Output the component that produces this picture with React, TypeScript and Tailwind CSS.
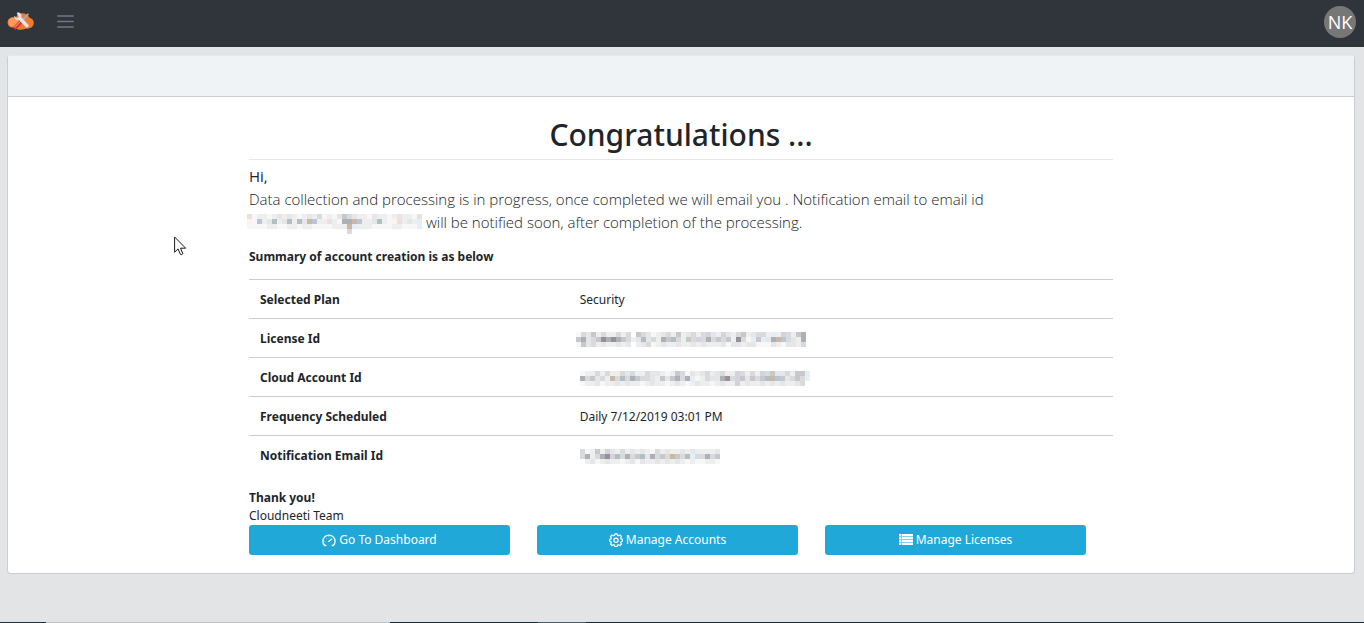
import React from 'react';

const TONES: Record<string, string> = {
  a: '#f7f7f8', b: '#eeeeef', c: '#e5e6e7', d: '#d9dadb', e: '#c6c8cb', f: '#adb0b5', g: '#969199',
  h: '#b8c6dc', i: '#ebdfe1', j: '#e2eef9', k: '#c9b8a5', l: '#b2bfc2', n: '#d6d1de', o: '#fcf3ed',
};

const NOTICE_EMAIL = [
  'iabbabcbcbabcbdabacedcbbacbbabcbbai',
  'oahbclbclblckhbbibaffkhbbclbaoibcbj',
  'aaaabbaabbabbaaaabbbkjbbbaaaabbaaaj',
  '....................d..............',
];
const LICENSE = [
  'adcebdbbdbd.edcabcdbebcdbdncbncbdebcddbjbndbef',
  'efcdegfgfedbclcdbfeldbedndfdedebgdajejcfkhdcbf',
  'aecdbcbbcbc.bcdabcbbcbbcbcbbbcaccbccaaacbaccbd',
];
const CLOUD_ACCOUNT = [
  'abbdbdbbdcdbbdccbabedacbcdbcdbbndbdbndeccdbeej',
  'fdecdbkdldfeddcbecefdfjabdccfgdnecedelkhecdedb',
  'abbcabbcbcbbabcbbabcbabcbbabcbbnbcbbcbcbcbbcd.',
];
const EMAIL = [
  'dabebncbdbcbcbadbcbbcbcjbbbc',
  'dfbdfgnldfdelcfdedkedljddfde',
  '.bcabcbbabcacbbcbcbcbabaabba',
];

function Redacted({ rows, label, className = '' }: { rows: string[]; label: string; className?: string }) {
  const cols = rows[0].length;
  return (
    <svg
      role="img"
      aria-label={label}
      width={cols * 5}
      height={rows.length * 5}
      shapeRendering="crispEdges"
      className={`inline-block ${className}`}
    >
      {rows.flatMap((row, y) =>
        [...row].map((c, x) =>
          TONES[c] ? <rect key={`${x}-${y}`} x={x * 5} y={y * 5} width="5" height="5" fill={TONES[c]} /> : null,
        ),
      )}
    </svg>
  );
}

function Logo() {
  return (
    <svg width="28" height="20" viewBox="0 0 28 20" aria-hidden="true">
      <path
        d="M6 5.200C2.800 5.200.6 7.600.6 10.400c0 2.900 2.200 5.100 5 5.100h2.200c1.300 1.500 3.600 2.300 6 2.300 2.200 0 4-.500 5.500-1.200 3.900.3 7.500-2 7.500-5.700 0-2.600-1.700-4.600-4.200-5.100C21 2.600 18 .9 14.500 1.200 12 1.400 10 2.600 8.800 5.400 8 5.200 7 5.100 6 5.200z"
        fill="#f5792a"
      />
      <path d="M6 5.800c-2.600 0-4.500 2-4.500 4.400 0 2.500 1.700 4.200 4 4.500l6-5.200C10 7 8.300 5.800 6 5.800z" fill="#ff9a56" />
      <path d="M20.600 1.200l1.400 1.200-7.300 8.300-1.700-1.500z" fill="#a3a8b6" />
      <path d="M12.600 8.600l2.700 2.600-5.800 5.900c-.7.7-1.800.6-2.500 0-.6-.7-.6-1.700 0-2.400z" fill="#d5392f" />
      <path d="M12.400 9.800l.8.800-5.200 5.200-.8-.8z" fill="#f28b80" />
      <path
        d="M7.300 4l2.700 2.200 1.700-1.400L10 1.400C9.800.2 11.500.2 12.600.9c1.600.9 2.300 2.600 1.700 4.200l7.200 8c.9 1.200-1.200 3.200-2.500 2.100L11.900 8c-2.600.7-5-1.300-4.600-4z"
        fill="#e3e4ee"
        stroke="#b4b6c4"
        strokeWidth=".3"
      />
    </svg>
  );
}

function GaugeIcon() {
  return (
    <svg width="14" height="14" viewBox="0 0 14 14" fill="none" stroke="#fff" aria-hidden="true">
      <path d="M4.400 12.500H2.700A6.100 6.100 0 1 1 11.300 12.500H9.600" strokeWidth="1.300" />
      <path d="M6.700 8.400l3-2.300" strokeWidth="1.300" strokeLinecap="round" />
      <path d="M2.500 8.500h.8M3.900 5l.5.5M7 3.400v.8" strokeWidth=".7" />
    </svg>
  );
}

function CogIcon() {
  return (
    <svg width="14" height="14" viewBox="0 0 14 14" fill="none" stroke="#fff" aria-hidden="true">
      <path
        d="M5.900.8h2.200l.4 1.600 1 .4 1.500-.8 1.500 1.500-.8 1.500.4 1 1.500.4v1.700l-1.500.4-.4 1.100.8 1.400-1.500 1.600-1.500-.9-1 .4-.4 1.500H5.900l-.4-1.500-1-.4-1.500.9L1.500 11l.8-1.400-.4-1.100L.5 8.100V6.400L1.900 6l.4-1-.8-1.500L3 2l1.500.8 1-.4z"
        strokeWidth="1.200"
        strokeLinejoin="round"
      />
      <circle cx="7" cy="7.200" r="2.100" strokeWidth="1.200" />
    </svg>
  );
}

function ListIcon() {
  return (
    <svg width="14" height="12" viewBox="0 0 14 12" fill="#fff" aria-hidden="true">
      <rect width="14" height="11" opacity=".45" />
      {[0, 3, 6, 9].map((y) => (
        <g key={y}>
          <rect x="0" y={y} width="2" height="2" />
          <rect x="3" y={y} width="11" height="2" />
        </g>
      ))}
    </svg>
  );
}

const SUMMARY: { label: string; value: React.ReactNode }[] = [
  { label: 'Selected Plan', value: 'Security' },
  { label: 'License Id', value: <Redacted rows={LICENSE} label="Hidden license id" className="-ml-1 align-middle" /> },
  { label: 'Cloud Account Id', value: <Redacted rows={CLOUD_ACCOUNT} label="Hidden account id" className="align-middle" /> },
  { label: 'Frequency Scheduled', value: 'Daily 7/12/2019 03:01 PM' },
  { label: 'Notification Email Id', value: <Redacted rows={EMAIL} label="Hidden email" className="align-middle" /> },
];

const ACTIONS = [
  { label: 'Go To Dashboard', icon: <GaugeIcon /> },
  { label: 'Manage Accounts', icon: <CogIcon /> },
  { label: 'Manage Licenses', icon: <ListIcon /> },
];

export default function App() {
  return (
    <div className="relative flex min-h-screen flex-col bg-[#e3e4e6] font-['Noto_Sans','Open_Sans',sans-serif] text-xs text-[#212529]">
      <header className="flex h-[47px] items-center bg-[#30353c] pb-1 pl-[7px] pr-2">
        <a href="#home" aria-label="Home">
          <Logo />
        </a>
        <button type="button" aria-label="Toggle menu" className="ml-[22px]">
          <svg width="17" height="14" viewBox="0 0 17 14" aria-hidden="true">
            <path d="M.8 1h15.400M.8 6.500h15.400M.8 12h15.400" stroke="#6d7884" strokeWidth="1.500" strokeLinecap="round" />
          </svg>
        </button>
        <button
          type="button"
          aria-label="Account NK"
          className="ml-auto flex size-8 items-center justify-center rounded-full bg-[#777777] font-['Open_Sans',sans-serif] text-lg text-white"
        >
          NK
        </button>
      </header>

      <main className="grow pb-10 pl-[7px] pr-[9px] pt-2">
        <section className="rounded-sm border border-[#c8ced3] border-t-[#e6e9eb] bg-white">
          <div className="h-[41px] border-b border-[#c8ced3] bg-[#eff3f6]" />
          <div className="px-[25px] pb-[18px] pt-4">
            <div className="mx-auto w-2/3">
              <h1 className="border-b border-[#e4e6e8] pb-[2px] text-center text-[30px] font-medium leading-[44px]">
                Congratulations ...
              </h1>
              <div className="pt-[5px] font-['Open_Sans',sans-serif] text-[15px] leading-[23px]">
                <p>Hi,</p>
                <p className="font-light">
                  Data collection and processing is in progress, once completed we will email you . Notification email to
                  email id
                  <br />
                  <Redacted rows={NOTICE_EMAIL} label="Hidden email" className="-ml-0.5 align-middle" /> will be notified
                  soon, after completion of the processing.
                </p>
              </div>
              <p className="pb-[13px] pt-[14px] font-bold leading-[18px]">Summary of account creation is as below</p>
              <table className="w-full table-fixed border-collapse">
                <tbody>
                  {SUMMARY.map((row) => (
                    <tr key={row.label} className="h-[39px] border-t border-[#c8ced3]">
                      <th scope="row" className="w-[37%] pl-[11px] pt-[2px] text-left align-middle font-bold">
                        {row.label}
                      </th>
                      <td className="pl-[11px] pt-[2px] align-middle">{row.value}</td>
                    </tr>
                  ))}
                </tbody>
              </table>
              <p className="pt-[14px] leading-[18px]">
                <strong>Thank you!</strong>
                <br />
                Cloudneeti Team
              </p>
              <div className="grid grid-cols-3">
                {ACTIONS.map((action) => (
                  <div key={action.label} className="pr-[27px]">
                    <button
                      type="button"
                      className="flex h-[30px] w-full items-center justify-center gap-[3px] rounded-[3px] bg-[#20a8d8] pt-px text-white"
                    >
                      {action.icon}
                      {action.label}
                    </button>
                  </div>
                ))}
              </div>
            </div>
          </div>
        </section>
      </main>

      <div className="flex h-px" aria-hidden="true">
        <div className="w-[46px] bg-[#1b333d]" />
        <div className="w-[344px] bg-[#bfc1c2]" />
        <div className="w-[148px] bg-[#122a38]" />
        <div className="w-[48px] bg-[#4b5f66]" />
        <div className="grow bg-[#122a38]" />
      </div>

      <svg className="absolute left-[174px] top-[236px]" width="13" height="20" viewBox="0 0 13 20" aria-hidden="true">
        <path
          d="M.6 1v15.200l3.500-3.300 2.300 5.400c.5.900 2.700.1 2.300-1L6.500 12.200h5.200z"
          fill="#fff"
          stroke="#1a1a22"
          strokeWidth="1"
        />
      </svg>
    </div>
  );
}
